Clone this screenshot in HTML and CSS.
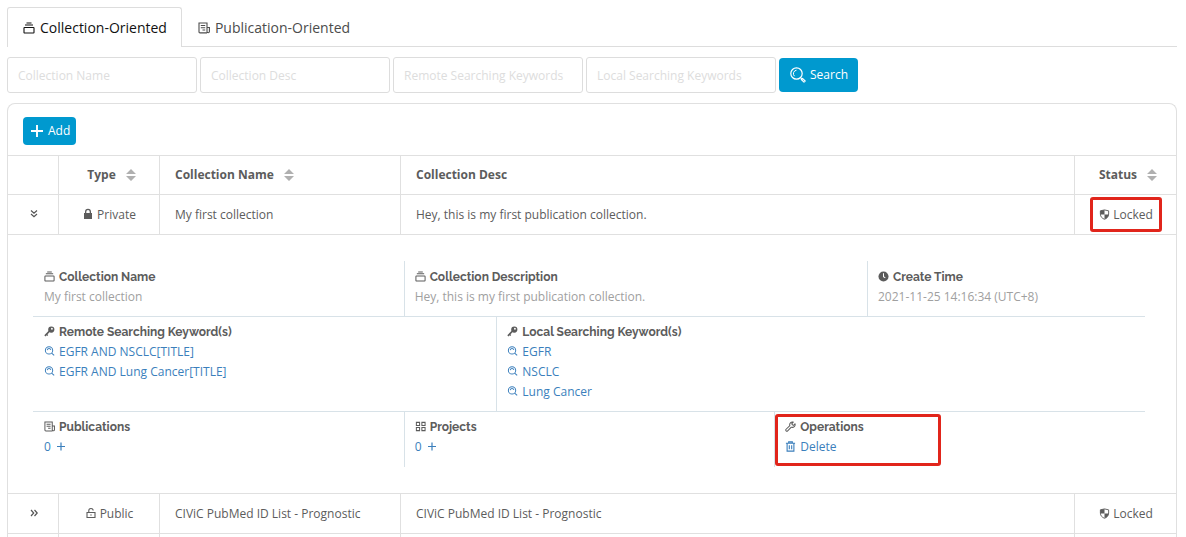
FILE: index.html
```html
<!DOCTYPE html>
<html lang="en">
<head>
<meta charset="utf-8">
<meta name="viewport" content="width=device-width, initial-scale=1">
<title>Collections</title>
<link rel="stylesheet" href="styles.css">
</head>
<body>
<svg class="sprite" aria-hidden="true">
  <symbol id="stack" viewBox="0 0 12 12"><path d="M3.500 1h5M2 3h8" fill="none" stroke="currentColor" stroke-width="1.1"/><rect x="1" y="5.500" width="10" height="5.500" rx=".6" fill="none" stroke="currentColor" stroke-width="1.1"/></symbol>
  <symbol id="news" viewBox="0 0 12 12"><path d="M9 10.900H2a1 1 0 0 1-1-1V1h8v8.500a1.200 1.200 0 0 0 2.400 0V5.500H9M2.800 3.500h4.400M2.800 5.700h4.400M4.500 8h2.700" fill="none" stroke="currentColor" stroke-width="1.1"/></symbol>
  <symbol id="search" viewBox="0 0 16 16"><circle cx="6.500" cy="6.500" r="5.700" fill="none" stroke="currentColor" stroke-width="1.200"/><path d="M6.500 3.200A3.500 3.500 0 0 0 4.500 9.200" fill="none" stroke="currentColor"/><path d="M10.600 10.600l1.200 1.200" stroke="currentColor" stroke-width="1.200"/><path d="M12.500 11.300l2.700 2.700-1.200 1.200-2.700-2.700z" fill="none" stroke="currentColor" stroke-width="1.100" stroke-linejoin="round"/></symbol>
  <symbol id="plus" viewBox="0 0 12 12"><path d="M6 0v12M0 6h12" stroke="currentColor" stroke-width="1.900"/></symbol>
  <symbol id="plus-thin" viewBox="0 0 12 12"><path d="M6 1.500v8M2 5.500h8" stroke="currentColor" stroke-width="1.200"/></symbol>
  <symbol id="sort" viewBox="0 0 10 12"><path d="M5 0l5 5H0zM5 12L0 7h10z" fill="currentColor"/></symbol>
  <symbol id="down" viewBox="0 0 10 10"><path d="M2 1.500l3 2.700 3-2.700M2 5l3 2.700L8 5" fill="none" stroke="currentColor" stroke-width="1.200"/></symbol>
  <symbol id="right" viewBox="0 0 10 10"><path d="M2 2l2.700 3L2 8M5.500 2l2.700 3-2.700 3" fill="none" stroke="currentColor" stroke-width="1.200"/></symbol>
  <symbol id="lock" viewBox="0 0 10 12"><path d="M1 5h1V3.800a3 3 0 0 1 6 0V5h1v6H1zM3.300 5h3.400V3.800a1.700 1.700 0 0 0-3.400 0z" fill="currentColor" fill-rule="evenodd"/></symbol>
  <symbol id="unlock" viewBox="0 0 10 12"><path d="M1 5.500h8v5H1zM2.800 5.500V3.800a2.200 2.200 0 0 1 4.400-.3M4.300 8h1.400" fill="none" stroke="currentColor" stroke-width="1.100"/></symbol>
  <symbol id="shield" viewBox="0 0 12 12"><path d="M6 1L10.500 2v3.500C10.500 8.500 8.500 10.300 6 11.200 3.500 10.300 1.500 8.500 1.500 5.500V2z" fill="none" stroke="currentColor"/><path d="M6 1v5H1.500V2zM6 6h4.500C10.300 8.500 8.500 10.300 6 11z" fill="currentColor"/></symbol>
  <symbol id="key" viewBox="0 0 12 12"><path d="M1 10.800l5-5.300" stroke="currentColor" stroke-width="1.800"/><path d="M2.600 9l1.500 1.400" stroke="currentColor" stroke-width="1.300"/><path d="M8 .5a3.400 3.400 0 1 1-.1 6.800A3.400 3.400 0 0 1 8 .5zM8.600 2a1 1 0 1 0 .1 2 1 1 0 0 0-.1-2z" fill="currentColor" fill-rule="evenodd"/></symbol>
  <symbol id="find" viewBox="0 0 12 12"><circle cx="5.500" cy="4.800" r="4" fill="none" stroke="currentColor" stroke-width="1.100"/><path d="M3.500 4.500c.3-1.200 1-1.700 2-1.700s1.700.6 2 1.500M8.300 7.700l2.800 2.600" fill="none" stroke="currentColor" stroke-width="1.100"/></symbol>
  <symbol id="clock" viewBox="0 0 12 12"><circle cx="6" cy="6" r="5.500" fill="currentColor"/><path d="M6 2.500v3.700l2 1.300" fill="none" stroke="#fff" stroke-width="1.100"/></symbol>
  <symbol id="grid" viewBox="0 0 12 12"><path d="M1.500 1.500H5V5H1.500zM7.500 1.500H11V5H7.500zM1.500 7H5v3.500H1.500zM7.500 7H11v3.500H7.500z" fill="none" stroke="currentColor" stroke-width="1.100"/></symbol>
  <symbol id="wrench" viewBox="0 0 12 12"><path d="M9 1.200a3 3 0 0 0-3.700 3.900L1.200 9a1.100 1.100 0 0 0 1.700 1.700l4-4A3 3 0 0 0 10.900 3L9 4.900 7.300 3.200z" fill="none" stroke="currentColor" stroke-width="1.100" stroke-linejoin="round"/></symbol>
  <symbol id="trash" viewBox="0 0 12 12"><path d="M1 2.500h10M4 2.500V1h4v1.500M2.300 2.500V11h7.400V2.500M4.700 4.500V9M7.300 4.500V9" fill="none" stroke="currentColor" stroke-width="1.200"/></symbol>
</svg>

<nav class="tabs">
  <a class="tab tab-active" href="#collection"><svg class="icon"><use href="#stack"/></svg>Collection-Oriented</a>
  <a class="tab" href="#publication"><svg class="icon"><use href="#news"/></svg>Publication-Oriented</a>
</nav>

<form class="search">
  <input class="field" type="text" placeholder="Collection Name" aria-label="Collection Name">
  <input class="field" type="text" placeholder="Collection Desc" aria-label="Collection Desc">
  <input class="field" type="text" placeholder="Remote Searching Keywords" aria-label="Remote Searching Keywords">
  <input class="field" type="text" placeholder="Local Searching Keywords" aria-label="Local Searching Keywords">
  <button class="button button-search" type="button"><svg class="icon-large"><use href="#search"/></svg>Search</button>
</form>

<main class="card">
  <div class="toolbar"><button class="button button-add" type="button"><svg class="icon"><use href="#plus"/></svg>Add</button></div>
  <table class="table">
    <colgroup><col class="col-toggle"><col class="col-type"><col class="col-name"><col><col class="col-status"></colgroup>
    <thead>
      <tr>
        <th></th>
        <th class="center">Type<svg class="sort"><use href="#sort"/></svg></th>
        <th>Collection Name<svg class="sort"><use href="#sort"/></svg></th>
        <th>Collection Desc</th>
        <th class="center">Status<svg class="sort"><use href="#sort"/></svg></th>
      </tr>
    </thead>
    <tbody>
      <tr>
        <td class="center"><button class="toggle" type="button" aria-label="Collapse row"><svg class="icon-small"><use href="#down"/></svg></button></td>
        <td class="center"><svg class="icon-lock"><use href="#lock"/></svg>Private</td>
        <td>My first collection</td>
        <td>Hey, this is my first publication collection.</td>
        <td class="center"><span class="marked marked-status"><svg class="icon-shield"><use href="#shield"/></svg>Locked</span></td>
      </tr>
      <tr>
        <td class="detail" colspan="5">
          <div class="band band-info">
            <section class="item"><h3 class="label"><svg class="icon-label"><use href="#stack"/></svg>Collection Name</h3><p class="value">My first collection</p></section>
            <section class="item"><h3 class="label"><svg class="icon-label"><use href="#stack"/></svg>Collection Description</h3><p class="value">Hey, this is my first publication collection.</p></section>
            <section class="item"><h3 class="label"><svg class="icon-label"><use href="#clock"/></svg>Create Time</h3><p class="value">2021-11-25 14:16:34 (UTC+8)</p></section>
          </div>
          <div class="band band-keywords">
            <section class="item"><h3 class="label"><svg class="icon-label"><use href="#key"/></svg>Remote Searching Keyword(s)</h3>
              <a class="link" href="#k1"><svg class="icon-label"><use href="#find"/></svg>EGFR AND NSCLC[TITLE]</a>
              <a class="link" href="#k2"><svg class="icon-label"><use href="#find"/></svg>EGFR AND Lung Cancer[TITLE]</a></section>
            <section class="item"><h3 class="label"><svg class="icon-label"><use href="#key"/></svg>Local Searching Keyword(s)</h3>
              <a class="link" href="#k3"><svg class="icon-label"><use href="#find"/></svg>EGFR</a>
              <a class="link" href="#k4"><svg class="icon-label"><use href="#find"/></svg>NSCLC</a>
              <a class="link" href="#k5"><svg class="icon-label"><use href="#find"/></svg>Lung Cancer</a></section>
          </div>
          <div class="band band-actions">
            <section class="item"><h3 class="label"><svg class="icon-label"><use href="#news"/></svg>Publications</h3><a class="link" href="#publications">0<svg class="icon"><use href="#plus-thin"/></svg></a></section>
            <section class="item"><h3 class="label"><svg class="icon-label"><use href="#grid"/></svg>Projects</h3><a class="link" href="#projects">0<svg class="icon"><use href="#plus-thin"/></svg></a></section>
            <section class="item marked marked-actions"><h3 class="label"><svg class="icon-label"><use href="#wrench"/></svg>Operations</h3><a class="link" href="#delete"><svg class="icon-label"><use href="#trash"/></svg>Delete</a></section>
          </div>
        </td>
      </tr>
      <tr>
        <td class="center"><button class="toggle" type="button" aria-label="Expand row"><svg class="icon-small"><use href="#right"/></svg></button></td>
        <td class="center"><svg class="icon-lock"><use href="#unlock"/></svg>Public</td>
        <td>CIViC PubMed ID List - Prognostic</td>
        <td>CIViC PubMed ID List - Prognostic</td>
        <td class="center"><svg class="icon-shield"><use href="#shield"/></svg>Locked</td>
      </tr>
      <tr class="row-end"><td></td><td></td><td></td><td></td><td></td></tr>
    </tbody>
  </table>
</main>
</body>
</html>
```

FILE: styles.css
```css
*, *::after { box-sizing: border-box; }
body {
  margin: 0;
  padding: 7px 9px 0 7px;
  background: #fff;
  color: #5c5c5c;
  font: 12px/20px "Open Sans", "Noto Sans", sans-serif;
}
.sprite { position: absolute; width: 0; height: 0; }
.icon { width: 12px; height: 12px; flex: none; }
.icon-label { width: 11px; height: 11px; flex: none; margin-bottom: 1px; }
.icon-large { width: 16px; height: 16px; }
.icon-small { width: 10px; height: 10px; display: block; }
.icon-lock { width: 10px; height: 12px; margin-right: 4px; vertical-align: -1px; }
.icon-shield { width: 11px; height: 11px; margin-right: 3px; vertical-align: -1px; }

.tabs { display: flex; height: 40px; border-bottom: 1px solid #ddd; }
.tab {
  display: flex;
  align-items: center;
  gap: 5px;
  height: 40px;
  padding: 0 14px 0 15px;
  border: 1px solid transparent;
  border-bottom: 0;
  color: #4c4c4c;
  font-size: 14px;
  text-decoration: none;
}
.tab-active { background: #fff; border-color: #ddd; border-radius: 3px 3px 0 0; color: #111; }

.search { display: flex; align-items: center; gap: 3px; margin-top: 10px; }
.field {
  width: 190px;
  height: 36px;
  padding: 0 10px;
  border: 1px solid #ddd;
  border-radius: 3px;
  background: #fff;
  color: #555;
  font: inherit;
}
.field::placeholder { color: #ddd; opacity: 1; }
.button {
  display: flex;
  align-items: center;
  border: 0;
  border-radius: 4px;
  background: #0099cf;
  color: #fff;
  font: inherit;
}
.button-search { gap: 4px; height: 34px; padding: 0 10px 0 11px; }
.button-add { gap: 5px; height: 28px; padding: 0 6px 0 8px; }

.card { margin-top: 10px; border: 1px solid #e0e0e0; border-bottom: 0; border-radius: 8px 8px 0 0; }
.toolbar { padding: 13px 15px 10px; }
.table { width: 100%; border-collapse: separate; border-spacing: 0; table-layout: fixed; }
.col-toggle { width: 51px; }
.col-type, .col-status { width: 101px; }
.col-name { width: 241px; }
th, td { height: 40px; padding: 0 15px; border-top: 1px solid #e0e0e0; border-right: 1px solid #e0e0e0; text-align: left; white-space: nowrap; }
th { height: 39px; font-weight: 700; }
th:last-child, td:last-child { border-right: 0; }
.row-end td { height: 4px; }
.center { padding: 0; text-align: center; }
td.center { padding-left: 1px; }
th.center { padding-left: 5px; }
.sort { width: 10px; height: 12px; margin-left: 10px; vertical-align: -2px; color: #b0b0b0; }
.toggle { padding: 0 0 5px; border: 0; background: none; color: #555; }

.marked { position: relative; }
.marked::after { content: ""; position: absolute; border: 3px solid #e1251b; border-radius: 3px; pointer-events: none; }
.marked-status::after { inset: -9px -9px -9px; }
.marked-actions::after { top: 2px; left: 0; width: 166px; height: 52px; }

td.detail { padding: 26px 31px 26px 25px; white-space: normal; }
.band { display: grid; border-bottom: 1px solid #d8e2e8; }
.band:last-child { border-bottom: 0; }
.band-info { grid-template-columns: 4fr 5fr 3fr; }
.band-keywords { grid-template-columns: 5fr 7fr; }
.band-actions { grid-template-columns: 4fr 4fr 4fr; }
.item { min-width: 0; padding: 5px 10px 10px; border-left: 1px solid #d8e2e8; }
.item:first-child { padding-left: 11px; border-left: 0; }
.band-info .item { padding-top: 6px; padding-bottom: 9px; }
.band-keywords .item { padding-bottom: 9px; }
.label { display: flex; align-items: center; gap: 4px; margin: 0; font: 700 12px/20px Raleway, Lato, sans-serif; }
.value { margin: 0; color: #a0a0a0; }
.link { display: flex; align-items: center; gap: 4px; color: #3b7fbc; text-decoration: none; }
```
